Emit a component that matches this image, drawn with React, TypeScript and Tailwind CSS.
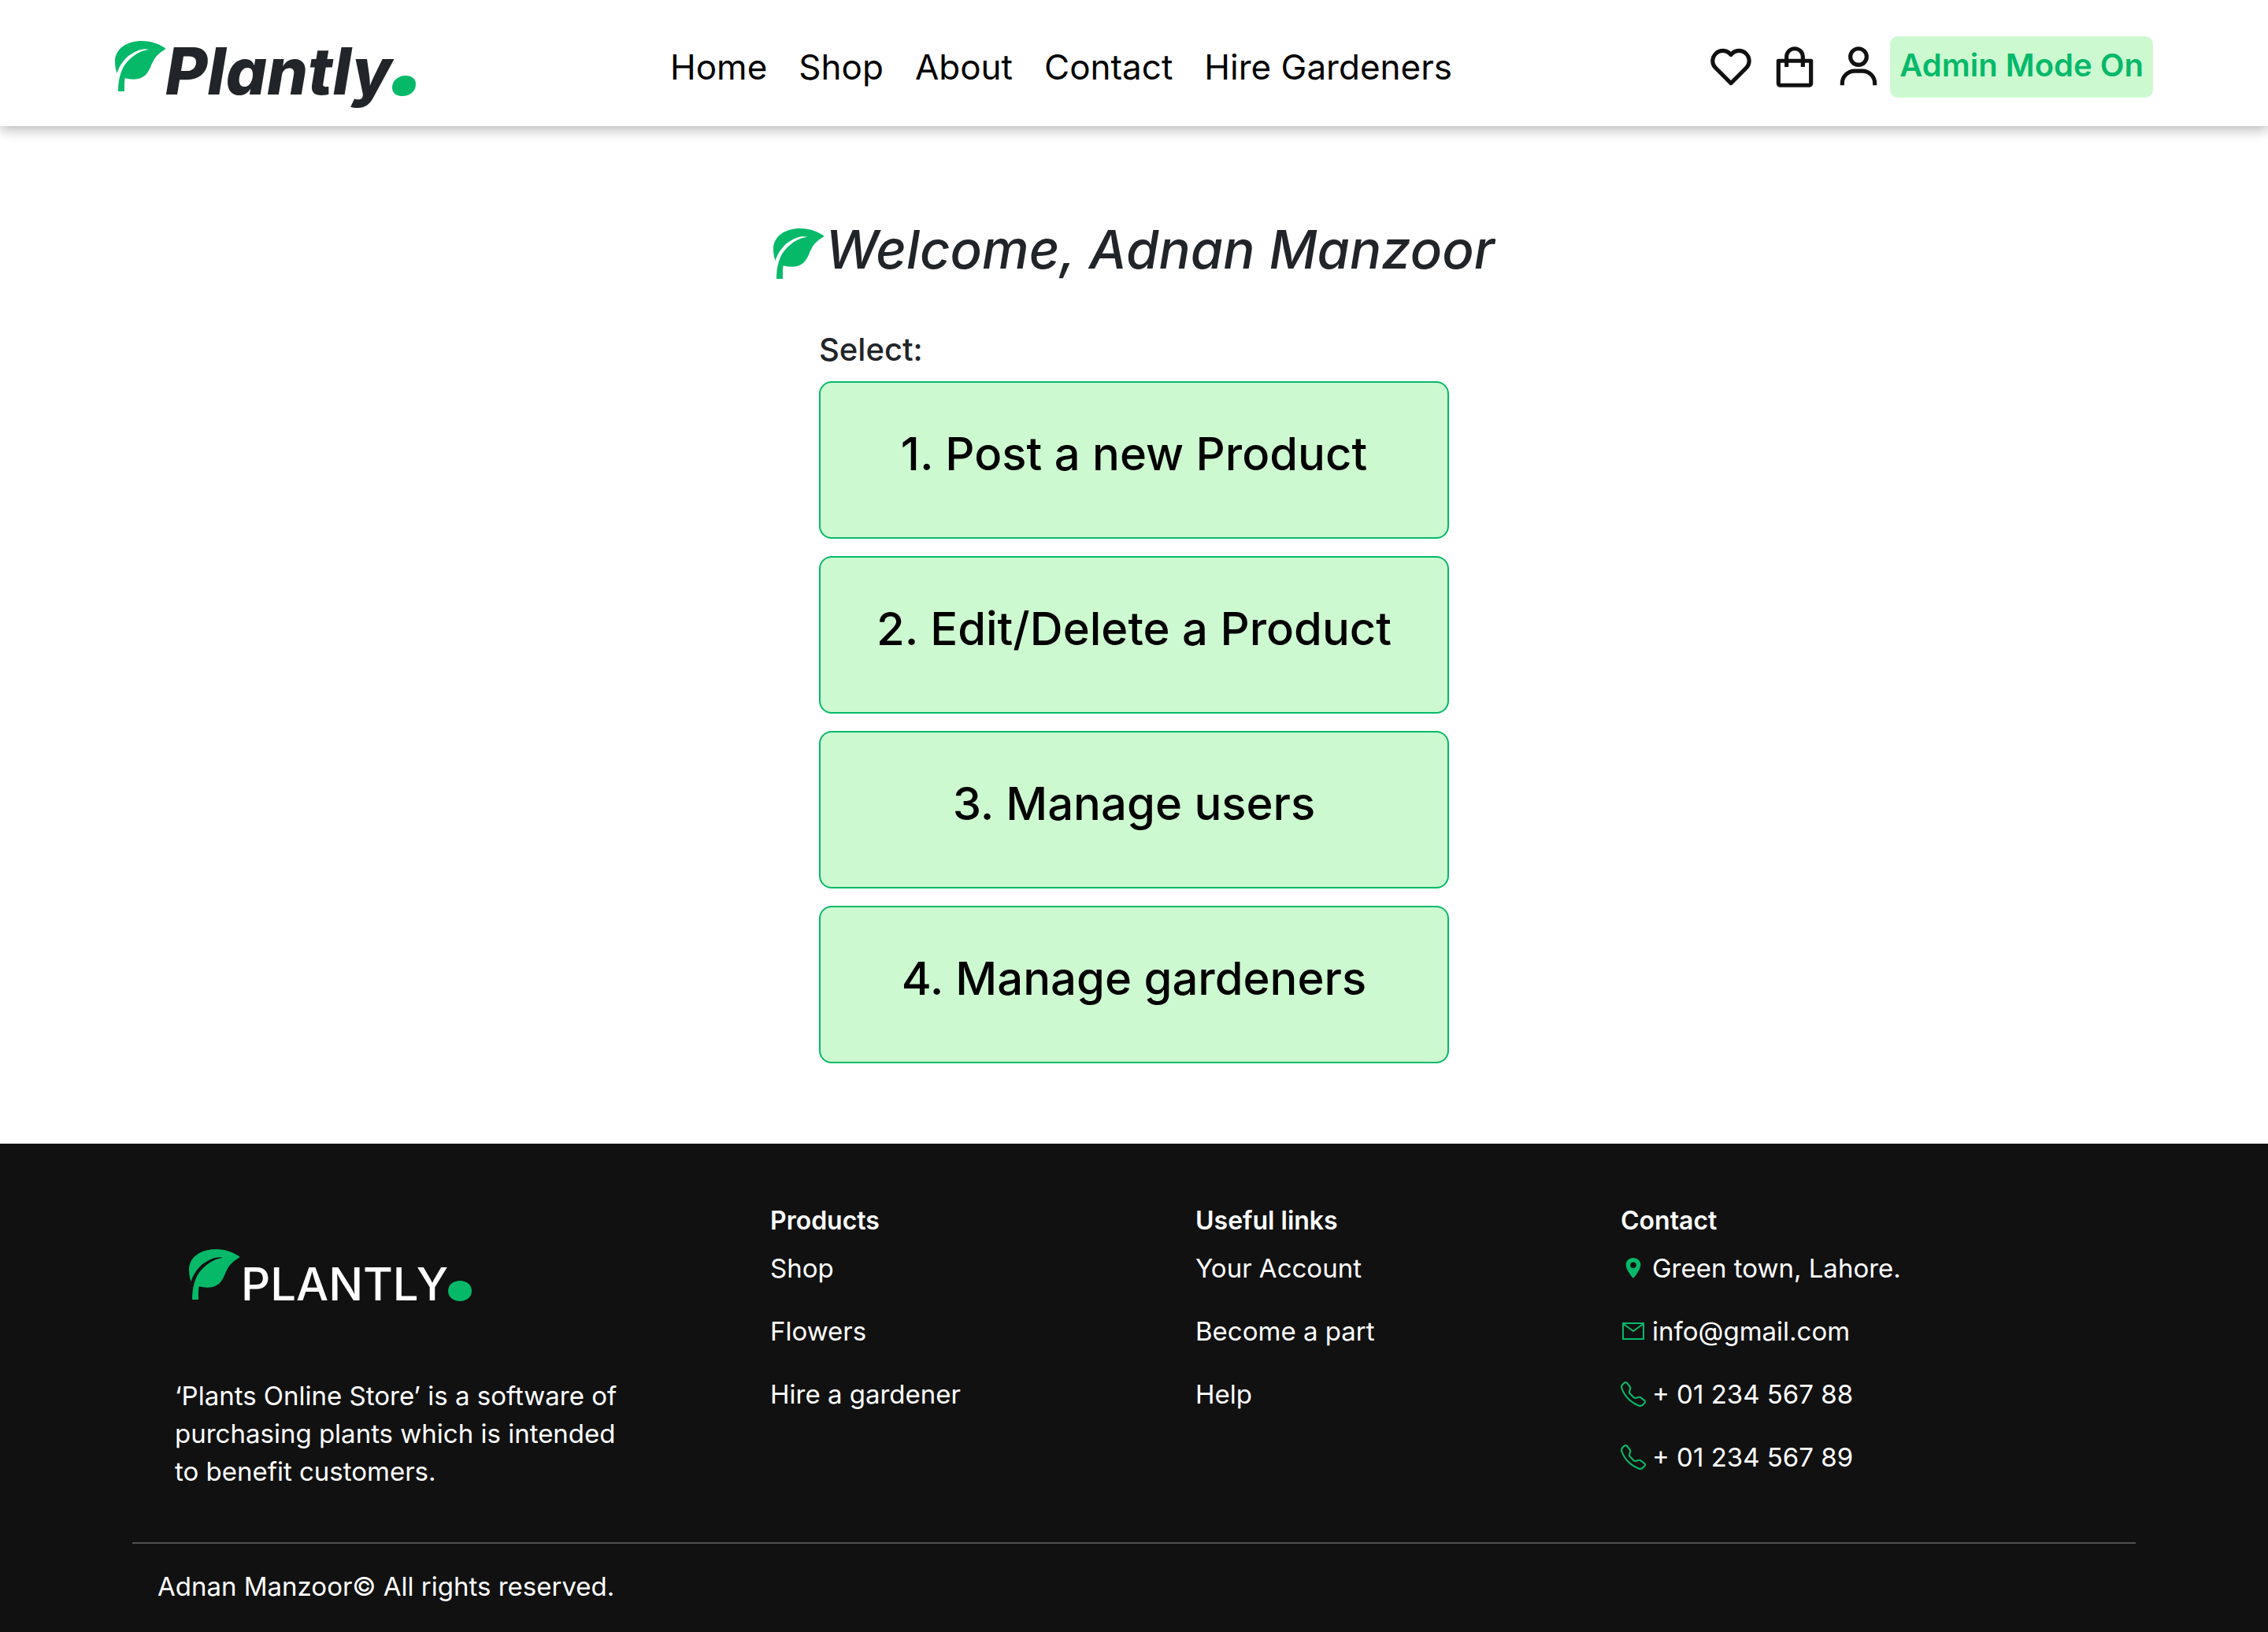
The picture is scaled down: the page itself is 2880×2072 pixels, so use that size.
import { BiHeart, BiShoppingBag, BiUser } from "react-icons/bi";
import { BsTelephone } from "react-icons/bs";
import { IoLocationSharp } from "react-icons/io5";

function Leaf() {
  return (
    <svg viewBox="0 0 192 192" className="size-16 shrink-0 fill-[#05b969]" aria-hidden="true">
      <path d="M8 124C2 108 0 92 0 78C0 32 42 0 103 0C140 0 168 12 191 27Q193 29 191 32C160 51 152 62 140 88C128 118 116 146 70 146C58 146 48 144 38 142C36 154 36 164 36 192L12 192C12 150 22 104 48 78C74 50 100 36 130 32C100 25 72 42 50 58C28 78 14 100 8 124Z" />
    </svg>
  );
}

function Dot({ slanted = false }: { slanted?: boolean }) {
  return (
    <svg viewBox="0 0 30 26" className="h-[26px] w-[30px] shrink-0 fill-[#05b969]" aria-hidden="true">
      {slanted ? (
        <path d="M17 0C25 0 30 4 30 11C30 20 22 26 13 26C5 26 0 22 0 15C0 6 8 0 17 0Z" />
      ) : (
        <path d="M15 0C23 0 30 5 30 13C30 21 23 26 15 26C7 26 0 21 0 13C0 5 7 0 15 0Z" />
      )}
    </svg>
  );
}

function Envelope() {
  return (
    <svg viewBox="0 0 28 22" className="h-[22px] w-7 fill-none stroke-[#05b969] stroke-2" aria-hidden="true">
      <path d="M1 1H27V21H1ZM1 1.5L14 11L27 1.5" />
    </svg>
  );
}

const navItems = ["Home", "Shop", "About", "Contact", "Hire Gardeners"];

const actions = [
  "1. Post a new Product",
  "2. Edit/Delete a Product",
  "3. Manage users",
  "4. Manage gardeners",
];

const linkGroups = [
  { title: "Products", links: ["Shop", "Flowers", "Hire a gardener"] },
  { title: "Useful links", links: ["Your Account", "Become a part", "Help"] },
];

const contacts = [
  { icon: <IoLocationSharp className="size-[30px]" />, text: "Green town, Lahore." },
  { icon: <Envelope />, text: "info@gmail.com" },
  { icon: <BsTelephone className="size-8" />, text: "+ 01 234 567 88" },
  { icon: <BsTelephone className="size-8" />, text: "+ 01 234 567 89" },
];

export default function App() {
  return (
    <div className="flex min-h-screen flex-col bg-white font-[Inter,sans-serif] text-[#212529]">
      <header className="flex items-center justify-between px-[146px] pt-10 pb-[30px] shadow-[0_4px_16px_rgba(0,0,0,0.3)]">
        <a href="#" className="flex items-start pt-3">
          <Leaf />
          <span className="text-[82px] leading-[78px] font-extrabold italic">Plantly</span>
          <span className="self-end pb-2">
            <Dot slanted />
          </span>
        </a>
        <nav className="flex gap-10 text-[44px] leading-[60px] text-black">
          {navItems.map((item) => (
            <a key={item} href="#">
              {item}
            </a>
          ))}
        </nav>
        <div className="flex items-center text-[#111]">
          <div className="flex gap-[19px] pr-[9px]">
            <button aria-label="Favourites">
              <BiHeart className="size-[62px]" />
            </button>
            <button aria-label="Shopping bag">
              <BiShoppingBag className="size-[62px]" />
            </button>
            <button aria-label="Account">
              <BiUser className="size-[62px]" />
            </button>
          </div>
          <button className="rounded-[10px] bg-[#cdf9d0] px-3 pt-2 pb-3 text-[40px] leading-[58px] font-semibold text-[#05b969]">
            Admin Mode On
          </button>
        </div>
      </header>

      <main className="flex flex-col items-center px-12 pt-[120px] pb-[102px]">
        <h1 className="flex items-end gap-0.5 text-[67px] leading-[74px] font-medium italic">
          <Leaf />
          Welcome, Adnan Manzoor
        </h1>
        <section className="w-full max-w-[800px] pt-15">
          <h2 className="pb-2.5 text-[40px] leading-[60px] font-medium">Select:</h2>
          <div className="flex flex-col gap-[22px]">
            {actions.map((action) => (
              <button
                key={action}
                className="rounded-2xl border-2 border-[#05b969] bg-[#cdf9d0] pt-14 pb-[72px] text-[58px] leading-[68px] font-medium text-black"
              >
                {action}
              </button>
            ))}
          </div>
        </section>
      </main>

      <footer className="flex-1 bg-[#111] px-[168px] pt-[74px] text-[33px] leading-[48px] text-white">
        <div className="grid grid-cols-[3fr_2fr_2fr_2fr] pr-[114px] pb-[66px]">
          <div className="pt-[60px] pl-[54px]">
            <div className="flex pl-[18px]">
              <Leaf />
              <span className="pl-0.5 text-[58px] leading-[88px] font-medium">PLANTLY</span>
              <span className="self-end pb-[22px]">
                <Dot />
              </span>
            </div>
            <p className="max-w-[590px] pt-[74px]">
              ‘Plants Online Store’ is a software of purchasing plants which is intended to benefit customers.
            </p>
          </div>
          {linkGroups.map((group) => (
            <div key={group.title}>
              <h3 className="pb-3 text-[32px] font-semibold">{group.title}</h3>
              <ul className="flex flex-col gap-8">
                {group.links.map((link) => (
                  <li key={link}>
                    <a href="#">{link}</a>
                  </li>
                ))}
              </ul>
            </div>
          ))}
          <div>
            <h3 className="pb-3 text-[32px] font-semibold">Contact</h3>
            <ul className="flex flex-col gap-8">
              {contacts.map((contact) => (
                <li key={contact.text} className="flex items-center gap-2">
                  <span className="flex w-8 justify-center text-[#05b969]">{contact.icon}</span>
                  {contact.text}
                </li>
              ))}
            </ul>
          </div>
        </div>
        <div className="border-t-2 border-[#505050] px-8 py-[30px]">
          <p>Adnan Manzoor© All rights reserved.</p>
        </div>
      </footer>
    </div>
  );
}
